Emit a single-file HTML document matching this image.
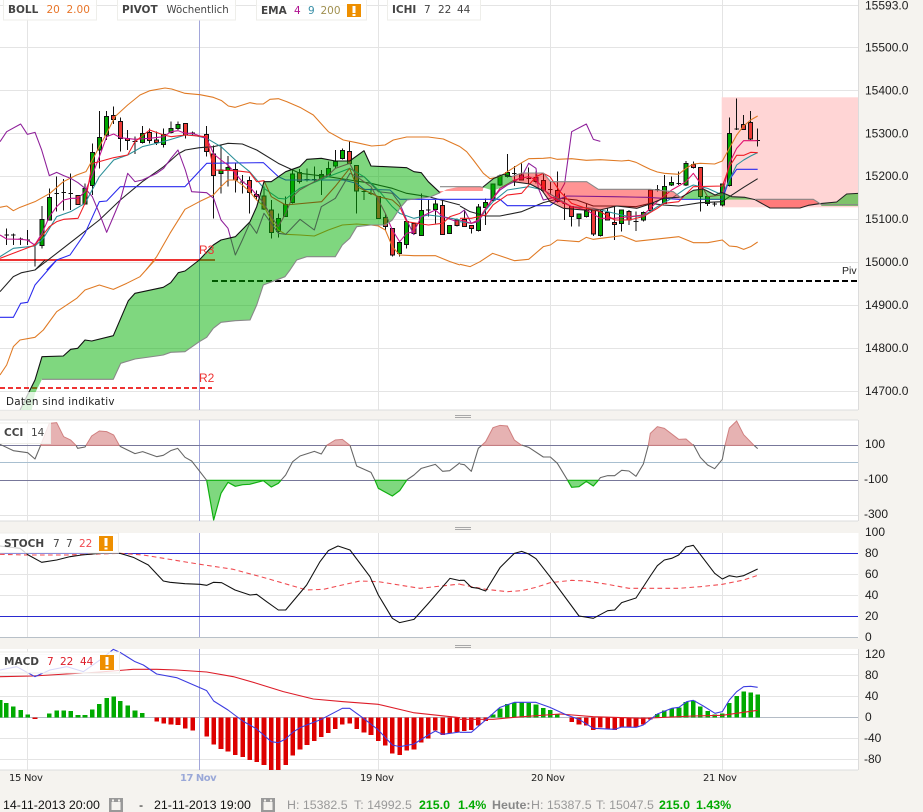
<!DOCTYPE html>
<html><head><meta charset="utf-8"><style>
html,body{margin:0;padding:0;background:#f5f3ef;width:923px;height:812px;overflow:hidden}
svg{display:block}
.ax{font:12px "Liberation Sans",sans-serif;fill:#1c1c1c}
.lb{font:10.5px "DejaVu Sans",sans-serif;fill:#444}
.bd{font-weight:bold}
.xl{font:10px "DejaVu Sans",sans-serif;fill:#222;letter-spacing:-.3px}
.bt{font:12.4px "Liberation Sans",sans-serif;fill:#111}
.gy{fill:#999}
.gn{fill:#00aa00;font-weight:bold}
.l{fill:none;stroke-width:3.2;stroke-linejoin:round}
.c{shape-rendering:crispEdges}
</style></head><body>
<svg width="923" height="812" viewBox="0 0 923 812" xmlns="http://www.w3.org/2000/svg">
<defs>
<clipPath id="m"><rect x="0" y="0" width="858" height="410"/></clipPath>
</defs>
<rect x="0" y="0" width="858.5" height="410" fill="#fff"/>
<rect x="0" y="420" width="858.5" height="101" fill="#fff"/>
<rect x="0" y="533" width="858.5" height="105" fill="#fff"/>
<rect x="0" y="649" width="858.5" height="121" fill="#fff"/>
<path stroke="#e4e4e4" fill="none" d="M0 47.5H858M0 90.5H858M0 133.5H858M0 176.5H858M0 219.5H858M0 262.5H858M0 305.5H858M0 348.5H858M0 391.5H858M0 5.5H858M0 515.5H858M0 574.5H858M0 595.5H858M0 654.5H858M0 675.5H858M0 696.5H858M0 738.5H858M0 759.5H858M27.5 0V410M378.5 0V410M550.5 0V410M722.5 0V410M27.5 420V521M378.5 420V521M550.5 420V521M722.5 420V521M27.5 533V638M378.5 533V638M550.5 533V638M722.5 533V638M27.5 649V770M378.5 649V770M550.5 649V770M722.5 649V770"/>
<path stroke="#dcdcdc" fill="none" d="M858.5 0V410M858.5 420V521M858.5 649V770M0 410H858M0 420H858M0 521H858M0 770H858"/>
<path stroke="#a2a6da" fill="none" d="M199.5 20V410M199.5 420V521M199.5 533V638M199.5 649V770"/>

<g clip-path="url(#m)">
<rect x="721.7" y="97.3" width="136.8" height="110" fill="#ffd5d5"/>
<path stroke="#ee3333" stroke-width="2" fill="none" d="M0 260H215"/>
<path stroke="#ee3333" stroke-width="2" stroke-dasharray="5 3" fill="none" d="M0 388H212"/>
<path stroke="#000" stroke-width="2" stroke-dasharray="6 3" fill="none" d="M212 281H858"/>

<g transform="matrix(.33333 0 0 .33333 0 0)">
<path class="c" stroke="#111" stroke-width="3" fill="none" d="M20 685V735M40 700V735M62 712V735M83 690V735M105 730V800M126 618V745M148 565V660M170 530V635M191 537V632M212 520V630M234 585V615M255 550V612M277 430V585M298 333V505M320 333V420M341 320V372M361 352V455M383 390V450M405 410V462M427 378V430M449 385V430M470 395V435M491 385V442M513 365V400M534 365V390M556 370V415M578 395V405M620 378V470M641 437V655M663 437V580M684 468V560M706 488V578M727 525V580M749 530V640M770 572V600M792 560V630M814 600V715M835 640V712M857 590V650M878 510V610M899 507V550M921 505V545M943 500V545M964 510V585M985 485V525M1006 450V505M1027 445V478M1049 425V490M1070 495V640M1092 565V600M1113 565V585M1135 590V655M1156 640V690M1177 685V770M1199 725V770M1220 660V745M1242 670V705M1264 580V708M1285 600V650M1306 600V670M1328 600V705M1349 675V702M1371 655V680M13 705h14M33 705h14M55 717h14M76 720h14M163 580h14M184 578h14M205 581h14M398 425h14M571 399h14M720 546h14M914 538h14M936 538h14M1085 575h14M1106 581h14M1278 630h14"/>
<path class="c" fill="#00a800" stroke="#111" stroke-width="3" d="M120 658h12v79h-12zM142 592h12v68h-12zM249 565h12v47h-12zM271 457h12v100h-12zM292 412h12v38h-12zM314 349h12v56h-12zM421 400h12v28h-12zM485 403h12v30h-12zM507 385h12v13h-12zM528 373h12v13h-12zM657 510h12v10h-12zM678 503h12v8h-12zM829 655h12v40h-12zM851 613h12v37h-12zM872 522h12v85h-12zM958 523h12v12h-12zM979 505h12v20h-12zM1000 485h12v13h-12zM1021 451h12v25h-12zM1193 727h12v33h-12zM1214 665h12v68h-12zM1258 631h12v75h-12zM1300 612h12v16h-12zM1343 676h12v24h-12z"/>
<path class="c" fill="#ec3a36" stroke="#111" stroke-width="3" d="M228 587h12v26h-12zM335 347h12v12h-12zM355 364h12v51h-12zM377 415h12v7h-12zM443 397h12v25h-12zM464 420h12v7h-12zM550 370h12v35h-12zM614 403h12v52h-12zM635 462h12v65h-12zM700 508h12v32h-12zM743 541h12v37h-12zM764 584h12v6h-12zM786 588h12v39h-12zM808 630h12v67h-12zM893 517h12v28h-12zM1043 455h12v35h-12zM1064 497h12v76h-12zM1129 590h12v65h-12zM1150 652h12v28h-12zM1171 685h12v80h-12zM1236 670h12v30h-12zM1322 617h12v86h-12zM1365 660h12v16h-12z"/>
<polyline class="l" stroke="#e07a24" points="0,622 20,618 40,632 60,622 105,605 150,580 190,545 230,525 258,515 277,480 298,440 320,400 345,350 383,315 420,285 450,272 495,264 515,267 555,280 600,284 640,292 665,302 685,318 705,322 750,308 770,312 790,312 810,298 835,296 860,305 900,322 940,345 985,395 1030,420 1070,428 1115,438 1155,435 1180,420 1220,411 1285,411 1330,417 1380,440"/>
<polyline class="l" stroke="#e07a24" points="438,810 470,770 510,700 555,628 598,605 640,585 663,560 684,540 706,540 727,555 749,575 770,600 792,620 814,660 835,690 857,703 900,705 943,708 985,690 1027,675 1070,672 1113,675 1135,678 1156,690 1177,740 1199,765 1242,767 1306,767 1350,785 1380,795"/>
<polyline class="l" stroke="#222" points="105,810 170,760 234,710 298,660 361,600 427,545 491,500 534,462 556,450 598,443 641,440 684,430 727,432 770,450 835,490 900,520 985,530 1049,540 1113,550 1177,565 1220,580 1285,590 1380,615"/>
<polyline class="l" stroke="#2a2aee" points="140,810 170,780 210,765 255,700 298,605 320,603 361,560 555,560 620,490 790,488 835,530 857,540 1030,540 1070,550 1092,568 1170,570 1200,598 1380,598"/>
<polyline class="l" stroke="#8e1f9a" points="0,425 20,395 62,372 82,403 105,397 125,450 148,527 170,517 191,527 212,535 234,548 255,565 277,590 298,640 320,697 341,648 361,600 383,520 405,545 427,540 470,520 491,505 513,475 534,450 556,510 575,575 620,578 641,595 663,660 684,685 706,765 727,720 749,670 770,700 792,640 814,670 835,700 857,703 900,658 943,690 964,620 1006,595 1050,520 1070,530 1092,530 1135,575 1177,580 1199,610 1220,660 1242,705"/>
<polyline class="l" stroke="#2a8f98" points="0,770 40,745 105,738 130,715 170,650 212,635 255,610 298,530 341,480 383,465 427,440 470,430 513,418 556,405 578,405 620,415 663,440 706,480 749,515 792,565 835,595 857,597 899,565 985,530 1049,505 1092,530 1135,570 1177,620 1199,640 1242,655 1285,645 1328,650 1380,660"/>
<polyline class="l" stroke="#c01290" points="0,705 20,717 60,718 82,720 104,735 126,700 148,650 170,620 191,600 212,595 234,595 255,575 277,525 298,470 320,410 341,402 361,413 405,418 449,415 491,410 513,395 534,392 556,400 578,400 620,415 641,462 663,480 684,495 706,520 727,545 749,560 770,585 792,610 814,650 835,680 857,640 878,590 899,570 943,545 985,525 1006,505 1049,490 1070,530 1092,545 1113,560 1135,600 1156,640 1177,690 1199,725 1220,700 1242,695 1264,650 1306,630 1328,650 1371,665"/>
<polyline class="l" stroke="#f01c24" points="0,775 105,735 148,680 170,665 191,658 234,655 255,610 277,490 298,485 341,473 383,465 405,425 449,390 491,405 513,410 556,405 620,410 641,510 706,512 749,517 770,545 792,542 814,590 857,615 965,605 1005,560 1049,505 1070,560 1135,590 1177,600 1199,620 1220,665 1285,675 1328,670 1350,650 1380,640"/>
</g>

<g transform="matrix(.33333 0 0 .33333 0 260)">
<polyline class="l" stroke="#e07a24" points="0,345 20,315 40,260 60,240 105,232 130,210 170,155 230,115 255,90 298,75 340,88 380,70 420,50 465,0"/>
<polyline class="l" stroke="#222" points="0,95 40,50 65,38 105,30 135,0"/>
<polyline class="l" stroke="#2a2aee" points="0,172 40,172 62,130 83,127 105,75 170,0"/>
</g>

<g transform="matrix(.33333 0 0 .33333 460 80)">
<path class="c" stroke="#111" stroke-width="3" fill="none" d="M13 390V440M34 437V460M55 372V455M77 355V435M99 312V365M120 283V318M142 222V292M163 258V318M185 250V302M206 262V310M228 275V310M250 280V335M271 305V345M292 275V368M314 340V420M335 379V440M357 402V440M379 370V412M400 390V468M421 390V470M443 385V422M464 380V480M485 390V455M507 390V435M528 395V453M550 395V425M571 328V395M592 315V335M613 285V372M635 290V318M656 275V315M678 243V318M700 245V265M721 262V395M743 350V378M764 365V380M787 310V380M808 113V320M830 55V150M851 105V150M872 93V180M893 145V200M156 281h14M199 295h14M264 328h14M307 371h14M521 425h14M585 328h14M649 310h14M757 372h14M823 147h14M886 182h14"/>
<path class="c" fill="#00a800" stroke="#111" stroke-width="3" d="M49 381h12v71h-12zM71 367h12v16h-12zM93 312h12v50h-12zM114 288h12v27h-12zM136 278h12v12h-12zM351 402h12v13h-12zM373 393h12v17h-12zM415 394h12v72h-12zM479 390h12v40h-12zM544 397h12v23h-12zM607 320h12v50h-12zM629 307h12v8h-12zM672 250h12v65h-12zM737 350h12v20h-12zM781 312h12v63h-12zM802 160h12v157h-12z"/>
<path class="c" fill="#ec3a36" stroke="#111" stroke-width="3" d="M7 418h12v22h-12zM28 437h12v8h-12zM179 285h12v15h-12zM222 293h12v12h-12zM244 302h12v30h-12zM286 332h12v33h-12zM329 379h12v31h-12zM394 390h12v72h-12zM437 398h12v22h-12zM458 427h12v6h-12zM501 394h12v26h-12zM565 330h12v62h-12zM694 253h12v10h-12zM715 262h12v88h-12zM845 133h12v15h-12zM866 127h12v50h-12z"/>
<polyline class="l" stroke="#e07a24" points="0,200 20,215 40,240 70,280 90,296 120,290 142,275 163,262 185,248 206,236 250,235 271,233 292,238 335,236 379,241 421,239 485,243 507,241 528,247 550,258 571,268 592,276 613,280 656,283 678,265 700,252 721,250 764,252 787,243 808,205 830,165 851,138 872,120 893,108"/>
<polyline class="l" stroke="#e07a24" points="0,553 30,560 60,545 98,520 163,542 206,538 250,500 271,495 292,480 357,485 379,472 400,478 485,467 528,484 656,470 700,488 743,488 787,480 808,498 830,500 851,508 872,500 893,486"/>
<polyline class="l" stroke="#222" points="0,378 30,395 77,408 120,408 185,395 250,368 300,355 350,360 400,378 470,378 528,380 570,370 610,375 656,378 721,368 787,365 808,350 851,322 893,296"/>
<polyline class="l" stroke="#2a2aee" points="0,358 120,358 142,377 270,377 292,360 320,348 460,350 560,352 656,358 787,358 808,300 830,268 893,268"/>
<polyline class="l" stroke="#8e1f9a" points="0,400 13,390 34,430 55,425 77,390 99,355 120,330 142,315 163,305 185,290 206,250 228,265 235,325 250,360 292,350 314,310 335,155 379,132 400,178 421,184"/>
<polyline class="l" stroke="#2a8f98" points="0,425 34,430 55,420 77,390 99,365 142,330 206,320 250,330 292,355 335,380 400,385 443,395 464,400 507,410 550,408 592,380 635,355 678,325 700,315 743,325 787,345 808,300 830,255 851,240 872,228 893,218"/>
<polyline class="l" stroke="#e0106e" points="0,420 34,430 55,420 77,385 99,355 120,325 163,300 206,290 228,300 250,325 271,350 292,360 335,380 379,390 421,415 464,415 507,410 550,405 592,365 635,330 678,305 700,280 721,310 743,350 787,345 808,250 830,205 851,182 893,182"/>
<polyline class="l" stroke="#f01c24" points="0,415 34,415 77,405 99,375 142,345 185,340 228,290 250,280 270,290 300,335 335,370 379,385 421,395 464,420 507,420 550,410 592,385 613,370 656,365 700,320 787,318 808,260 830,226 851,226 872,217 893,218"/>
<path fill="#ff0000" fill-opacity=".42" d="M-60 340L-40 328L0 320H60L70 322L68 333H-60ZM155 290L185 279H250L272 305H380L415 328H570L640 335L665 355L610 355L570 372L530 385L470 378L420 390H370L310 385L270 365L245 330L210 312L160 305ZM885 358H1060L1078 371L1045 376L1020 384H930Z"/>
<path fill="#00b000" fill-opacity=".5" d="M68 322L100 296L130 283L155 290L160 305L125 322L100 332ZM665 356L700 331L730 327L765 345L785 337L815 350L855 352L885 359H740ZM1080 372L1130 366L1160 342L1195 340V378H1085Z"/>
<path fill="none" stroke="#222" stroke-width="3.2" stroke-linejoin="round" d="M68 322L100 296L130 283L155 290M160 305L210 312L245 330L270 365L310 385L370 390L420 390L470 378L530 385L570 372L610 355L665 351L700 331L730 327L765 345L785 337L815 350L855 352L885 359L930 384H1020L1045 376L1078 371L1130 366L1160 342L1195 340"/>
<path fill="none" stroke="#888" stroke-width="3.2" stroke-linejoin="round" d="M-60 320H60L68 322M155 290L185 279H250L272 305H380L415 328H570L640 335L665 355M885 358H1060L1085 374H1195"/>
</g>

<path fill="#00b000" fill-opacity=".5" d="M20 410L35 380L42 356.7L63.3 356L70.7 349.3L77.7 348.3L85 340L91.7 341L113.3 335.7L128.3 300.7L135 293.3L163.3 287.3L170.7 282.7L178.3 272.7L185 271L199.3 260L213.3 245L221 240L235.3 236.7L250 221.7L256.7 206.7L264 181.7L271.3 181.7L285.7 171.7L299.7 166.7L307 159.3L321.3 158.3L335.3 161L349.7 161L364 150.7L371 166L406.7 167.7L414 171.7L421.3 172.7L428.3 181.7L440 192.7L430 197L407 200L400 208L392.3 220L385.3 225L371 225L356.7 226.7L349.7 238.3L342.3 245L335.3 256.7L306.7 256.7L296.7 260L290 270L285 276.7L263.3 285L256.7 305L250 320L235.3 320.7L221 322.3L213.3 328.3L206.7 337.3L199.3 341.7L185 351.7L170.7 352.3L163.3 355L156.7 356L135 359L120.7 363.3L113.3 379.3L42 379.3L35 393.3L31.7 410Z"/>
<path fill="none" stroke="#111" stroke-width="1.1" stroke-linejoin="round" d="M20 410L35 380L42 356.7L63.3 356L70.7 349.3L77.7 348.3L85 340L91.7 341L113.3 335.7L128.3 300.7L135 293.3L163.3 287.3L170.7 282.7L178.3 272.7L185 271L199.3 260L213.3 245L221 240L235.3 236.7L250 221.7L256.7 206.7L264 181.7L271.3 181.7L285.7 171.7L299.7 166.7L307 159.3L321.3 158.3L335.3 161L349.7 161L364 150.7L371 166L406.7 167.7L414 171.7L421.3 172.7L428.3 181.7L440 192.7"/>
<path fill="none" stroke="#888" stroke-width="1.1" stroke-linejoin="round" d="M440 192.7L430 197L407 200L400 208L392.3 220L385.3 225L371 225L356.7 226.7L349.7 238.3L342.3 245L335.3 256.7L306.7 256.7L296.7 260L290 270L285 276.7L263.3 285L256.7 305L250 320L235.3 320.7L221 322.3L213.3 328.3L206.7 337.3L199.3 341.7L185 351.7L170.7 352.3L163.3 355L156.7 356L135 359L120.7 363.3L113.3 379.3L42 379.3"/>
</g>
<text x="199" y="254" font-family="Liberation Sans" font-size="12" fill="#ee3333">R3</text>
<text x="199" y="382" font-family="Liberation Sans" font-size="12" fill="#ee3333">R2</text>
<text x="842" y="274" font-family="Liberation Sans" font-size="10.5" fill="#222">Piv</text>
<rect x="0" y="392" width="120" height="18" fill="#fff" fill-opacity=".75"/>
<text x="6" y="405" font-family="DejaVu Sans" font-size="10.4" fill="#222" letter-spacing=".25">Daten sind indikativ</text>

<!-- CCI -->
<path stroke="#77779a" fill="none" d="M0 445.5H858M0 480.5H858"/>
<path stroke="#a8bfd0" fill="none" d="M0 462.5H858"/>
<g transform="matrix(.33333 0 0 .33333 0 260)">
<path fill="#e6b2b2" stroke="#d08080" stroke-width="3" d="M122 556L148 490L170 488L191 530L212 540L228 556ZM258 556L275 528L298 513L320 515L341 525L358 556ZM980 556L1006 540L1027 538L1050 556Z"/>
<path fill="#7fd87f" stroke="#10b010" stroke-width="3.6" stroke-linejoin="round" d="M620 661L641 780L663 700L684 667L706 679L728 674L749 673L790 662L814 681L835 670L843 661ZM1125 661L1135 685L1177 708L1199 692L1220 661Z"/>
<polyline class="l" stroke="#666" points="0,553 40,572 83,578 105,597 122,556"/>
<polyline class="l" stroke="#666" points="228,556 233,565 255,561 258,556"/>
<polyline class="l" stroke="#666" points="358,556 362,560 405,581 428,575 470,590 490,586 512,572 533,565 555,592 575,603 620,661"/>
<polyline class="l" stroke="#666" points="843,661 857,645 878,605 900,588 943,574 964,582 980,556"/>
<polyline class="l" stroke="#666" points="1050,556 1070,618 1113,637 1125,661"/>
<polyline class="l" stroke="#666" points="1220,660 1242,645 1264,625 1306,613 1328,634 1349,632 1380,608"/>
</g>
<g transform="matrix(.33333 0 0 .33333 460 400)">
<path fill="#e6b2b2" stroke="#d08080" stroke-width="3" d="M65 136L77 125L99 83L120 76L142 78L163 120L185 136ZM565 136L571 100L592 80L613 85L656 118L678 117L700 136ZM795 136L808 84L830 63L851 104L882 136Z"/>
<path fill="#7fd87f" stroke="#10b010" stroke-width="3.6" stroke-linejoin="round" d="M323 241L335 262L357 260L379 244L400 258L415 241Z"/>
<polyline class="l" stroke="#666" points="0,192 13,194 34,214 55,145 65,136"/>
<polyline class="l" stroke="#666" points="185,135 206,142 250,171 271,171 292,190 323,241"/>
<polyline class="l" stroke="#666" points="415,241 421,233 443,227 464,227 485,211 507,213 528,229 550,192 565,136"/>
<polyline class="l" stroke="#666" points="700,133 721,172 743,195 764,206 787,178 795,136"/>
<polyline class="l" stroke="#666" points="882,136 893,146"/>
</g>

<!-- STOCH -->
<path stroke="#2a2ad0" fill="none" d="M0 553.5H858M0 616.5H858"/>
<path stroke="#b8c0c8" fill="none" d="M0 637.5H858"/>
<g transform="matrix(.33333 0 0 .33333 0 520)">
<polyline class="l" stroke="#f04a50" stroke-dasharray="14 10" points="0,103 80,105 200,105 360,100 430,105 600,133 700,148 800,175 920,210 970,208 1080,183 1135,185 1260,205 1380,192"/>
<polyline class="l" stroke="#111" points="0,78 60,85 85,105 125,127 170,120 210,110 245,105 300,100 360,100 400,112 445,135 490,183 510,187 555,191 600,193 620,196 640,187 665,188 705,210 750,225 770,223 800,245 835,270 857,270 920,195 960,125 985,92 1014,78 1050,90 1110,170 1135,225 1177,295 1199,308 1242,298 1285,250 1350,175 1380,182"/>
</g>
<g transform="matrix(.33333 0 0 .33333 460 400)">
<polyline class="l" stroke="#f04a50" stroke-dasharray="14 10" points="0,553 77,568 142,575 185,572 228,562 271,548 335,541 379,543 443,553 507,565 592,565 656,565 721,560 787,553 851,540 893,526"/>
<polyline class="l" stroke="#111" points="0,541 13,541 34,562 55,565 77,573 120,503 163,460 185,454 206,462 228,476 270,530 357,648 400,655 443,632 464,630 485,608 528,594 571,528 592,497 613,480 635,475 656,465 678,441 700,436 764,520 787,537 808,527 830,531 851,527 893,507"/>
</g>

<!-- MACD -->
<path stroke="#b4bcc6" fill="none" d="M0 717.5H858"/>
<g transform="matrix(.33333 0 0 .33333 0 520)">
<path class="c" fill="none" stroke="#00aa00" stroke-width="14" d="M0 592V540M19 592V549M40 592V560M62 592V570M83 592V583M148 592V580M170 592V572M191 592V571M212 592V573M234 592V585M255 592V585M277 592V569M298 592V552M320 592V534M341 592V530M361 592V543M383 592V557M405 592V571M427 592V579"/>
<path class="c" fill="none" stroke="#dd0000" stroke-width="14" d="M105 592V597M470 592V605M491 592V610M513 592V613M534 592V615M556 592V625M578 592V632M620 592V649M641 592V674M663 592V687M684 592V694M706 592V705M728 592V711M749 592V720M770 592V726M792 592V735M814 592V750M835 592V750M857 592V735M878 592V706M900 592V689M921 592V675M943 592V663M964 592V651M985 592V639M1006 592V627M1027 592V613M1049 592V611M1070 592V627M1092 592V638M1113 592V645M1135 592V663M1156 592V677M1177 592V701M1199 592V705M1220 592V692M1242 592V688M1264 592V668M1285 592V655M1306 592V632M1328 592V645M1349 592V640M1371 592V636"/>
<polyline class="l" stroke="#dd1c28" points="0,470 100,468 200,462 300,456 400,448 470,448 530,450 620,456 700,470 770,490 850,515 940,537 1030,545 1135,553 1240,578 1380,593"/>
<polyline class="l" stroke="#3c3ce0" points="0,450 50,440 105,470 150,450 200,440 250,455 300,420 340,388 360,397 405,425 430,435 470,462 530,473 620,512 641,543 684,570 728,603 770,627 814,665 835,668 857,657 878,637 900,623 964,598 1027,565 1049,565 1092,596 1135,630 1177,675 1199,680 1242,672 1285,645 1306,633 1328,643 1380,636"/>
</g>
<g transform="matrix(.33333 0 0 .33333 460 630)">
<path class="c" fill="none" stroke="#dd0000" stroke-width="14" d="M13 262V303M34 262V300M55 262V287M77 262V273M335 262V276M357 262V284M379 262V286M400 262V300M421 262V293M443 262V295M464 262V300M485 262V291M507 262V291M528 262V291M550 262V283M571 262V268"/>
<path class="c" fill="none" stroke="#00aa00" stroke-width="14" d="M99 262V253M120 262V235M142 262V222M163 262V217M185 262V217M206 262V219M228 262V224M250 262V234M271 262V240M292 262V252M592 262V252M613 262V242M635 262V235M657 262V232M678 262V216M700 262V212M721 262V229M743 262V243M764 262V253M787 262V250M808 262V219M830 262V198M851 262V184M872 262V187M893 262V193"/>
<polyline class="l" stroke="#dd1c28" points="0,268 100,268 163,262 300,252 400,260 550,265 700,258 787,256 893,241"/>
<polyline class="l" stroke="#3c3ce0" points="0,307 34,307 77,270 120,232 163,217 228,217 270,232 320,255 357,268 400,295 464,298 485,291 528,292 550,285 592,252 635,235 657,232 680,215 700,211 730,228 765,250 787,245 808,210 830,185 851,170 872,169 893,172"/>
</g>

<!-- label boxes -->
<g fill="#fff" fill-opacity=".8" stroke="#eeeeea">
<rect x="3.5" y="-1" width="93" height="21"/>
<rect x="117.5" y="-1" width="118" height="21"/>
<rect x="256.5" y="-1" width="110" height="21"/>
<rect x="387.5" y="-1" width="93" height="21"/>
<rect x="-1" y="423" width="51.5" height="20.5"/>
<rect x="-1" y="533" width="119.5" height="20"/>
<rect x="-1" y="652" width="120.5" height="21"/>
</g>
<text class="lb" y="13"><tspan x="8" class="bd">BOLL</tspan><tspan x="46.5" fill="#e8762a">20</tspan><tspan x="66.5" fill="#e8762a">2.00</tspan></text>
<text class="lb" y="13"><tspan x="122" class="bd">PIVOT</tspan><tspan x="166.5" font-size="10.2">Wöchentlich</tspan></text>
<text class="lb" y="14"><tspan x="261" class="bd">EMA</tspan><tspan x="294" fill="#b01090">4</tspan><tspan x="308" fill="#3a90a8">9</tspan><tspan x="320.5" fill="#a09050">200</tspan></text>
<text class="lb" y="13"><tspan x="392" class="bd">ICHI</tspan><tspan x="424">7</tspan><tspan x="438">22</tspan><tspan x="457">44</tspan></text>
<text class="lb" y="436"><tspan x="4" class="bd">CCI</tspan><tspan x="31">14</tspan></text>
<text class="lb" y="547"><tspan x="4" class="bd">STOCH</tspan><tspan x="53">7</tspan><tspan x="66">7</tspan><tspan x="79" fill="#f04a50">22</tspan></text>
<text class="lb" y="665"><tspan x="4" class="bd">MACD</tspan><tspan x="47" fill="#dd1c28">7</tspan><tspan x="60" fill="#dd1c28">22</tspan><tspan x="80" fill="#dd1c28">44</tspan></text>
<g>
<rect x="347" y="4" width="14" height="13" fill="#ee8f00"/><path fill="#fff" d="M352.5 6h3v7h-3zM352.5 14h3v2h-3z"/>
<rect x="99" y="536" width="14" height="15" fill="#ee8f00"/><path fill="#fff" d="M104.5 538h3v8h-3zM104.5 547.5h3v2h-3z"/>
<rect x="100" y="655" width="14" height="15" fill="#ee8f00"/><path fill="#fff" d="M105.5 657h3v8h-3zM105.5 666.500h3v2h-3z"/>
</g>

<!-- separators handles -->
<path stroke="#a8a8a8" fill="none" d="M455 415.500h16M455 417.500h16M455 527.500h16M455 529.500h16M455 645.500h16M455 647.500h16"/>

<!-- axes -->
<g class="ax">
<text class="ax" x="865" y="9.500">15593.0</text>
<text class="ax" x="865" y="51.500">15500.0</text>
<text class="ax" x="865" y="94.500">15400.0</text>
<text class="ax" x="865" y="137.500">15300.0</text>
<text class="ax" x="865" y="180">15200.0</text>
<text class="ax" x="865" y="223">15100.0</text>
<text class="ax" x="865" y="266">15000.0</text>
<text class="ax" x="865" y="309">14900.0</text>
<text class="ax" x="865" y="352">14800.0</text>
<text class="ax" x="865" y="395">14700.0</text>
<text class="ax" x="865" y="448">100</text>
<text class="ax" x="864" y="483">-100</text>
<text class="ax" x="864" y="518">-300</text>
<text class="ax" x="865" y="536">100</text>
<text class="ax" x="865" y="557">80</text>
<text class="ax" x="865" y="578">60</text>
<text class="ax" x="865" y="599">40</text>
<text class="ax" x="865" y="620">20</text>
<text class="ax" x="865" y="641">0</text>
<text class="ax" x="865" y="658">120</text>
<text class="ax" x="865" y="679">80</text>
<text class="ax" x="865" y="700">40</text>
<text class="ax" x="865" y="721">0</text>
<text class="ax" x="864" y="742">-40</text>
<text class="ax" x="864" y="763">-80</text>
</g>
<text class="xl" x="9" y="781">15 Nov</text>
<text class="xl" x="180" y="781" style="fill:#9aa8d8;font-weight:bold;letter-spacing:-.5px">17 Nov</text>
<text class="xl" x="360" y="781">19 Nov</text>
<text class="xl" x="531" y="781">20 Nov</text>
<text class="xl" x="703" y="781">21 Nov</text>

<!-- bottom -->
<text class="bt" x="3" y="809">14-11-2013 20:00</text>
<text class="bt" x="139" y="809">-</text>
<text class="bt" x="154" y="809">21-11-2013 19:00</text>
<g>
<rect x="109" y="798" width="14" height="14" fill="#999"/><rect x="111.500" y="802" width="9" height="8" fill="#f5f3ef"/><path fill="#f5f3ef" d="M112 799.500h2v2h-2zM118 799.500h2v2h-2z"/>
<rect x="261" y="798" width="14" height="14" fill="#999"/><rect x="263.500" y="802" width="9" height="8" fill="#f5f3ef"/><path fill="#f5f3ef" d="M264 799.500h2v2h-2zM270 799.500h2v2h-2z"/>
</g>
<text class="bt gy" x="287" y="809">H: 15382.5</text>
<text class="bt gy" x="354" y="809">T: 14992.5</text>
<text class="bt gn" x="419" y="809">215.0</text>
<text class="bt gn" x="458" y="809">1.4%</text>
<text class="bt gy" x="492" y="809" style="font-weight:bold;fill:#888">Heute:</text>
<text class="bt gy" x="531" y="809">H: 15387.5</text>
<text class="bt gy" x="596" y="809">T: 15047.5</text>
<text class="bt gn" x="659" y="809">215.0</text>
<text class="bt gn" x="696" y="809">1.43%</text>
</svg>
</body></html>
